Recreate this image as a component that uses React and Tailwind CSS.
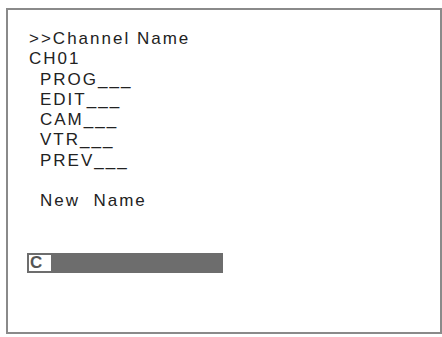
import React from 'react';

const items = ['PROG___', 'EDIT___', 'CAM___', 'VTR___', 'PREV___'];

const App = () => {
    return (
        <div className="w-[442px] h-[337px] bg-white pt-[8px] pl-[6px]">
            <div
                className="w-[436px] h-[326px] border-2 border-[#8a8a8a] pt-[19px] pl-[21px] text-[17px] leading-[20.3px] tracking-[2px] text-[#222]"
                style={{ fontFamily: '"Liberation Sans", Arial, sans-serif' }}
            >
                <div>&gt;&gt;Channel Name</div>
                <div>CH01</div>
                {items.map((item) => (
                    <div key={item} className="pl-[11px]">{item}</div>
                ))}
                <div className="h-[20.3px]" />
                <div className="pl-[11px] whitespace-pre">New  Name</div>

                {/* input bar */}
                <div className="mt-[41px] -ml-[2px] w-[196px] h-[20px] bg-[#6d6d6d] flex items-center pl-[2px]">
                    <div className="h-[16px] w-[22px] bg-white flex items-center pl-[1px]">
                        <span className="text-[17px] leading-none font-bold text-[#555] tracking-normal">C</span>
                    </div>
                </div>
            </div>
        </div>
    );
};

export default App;
